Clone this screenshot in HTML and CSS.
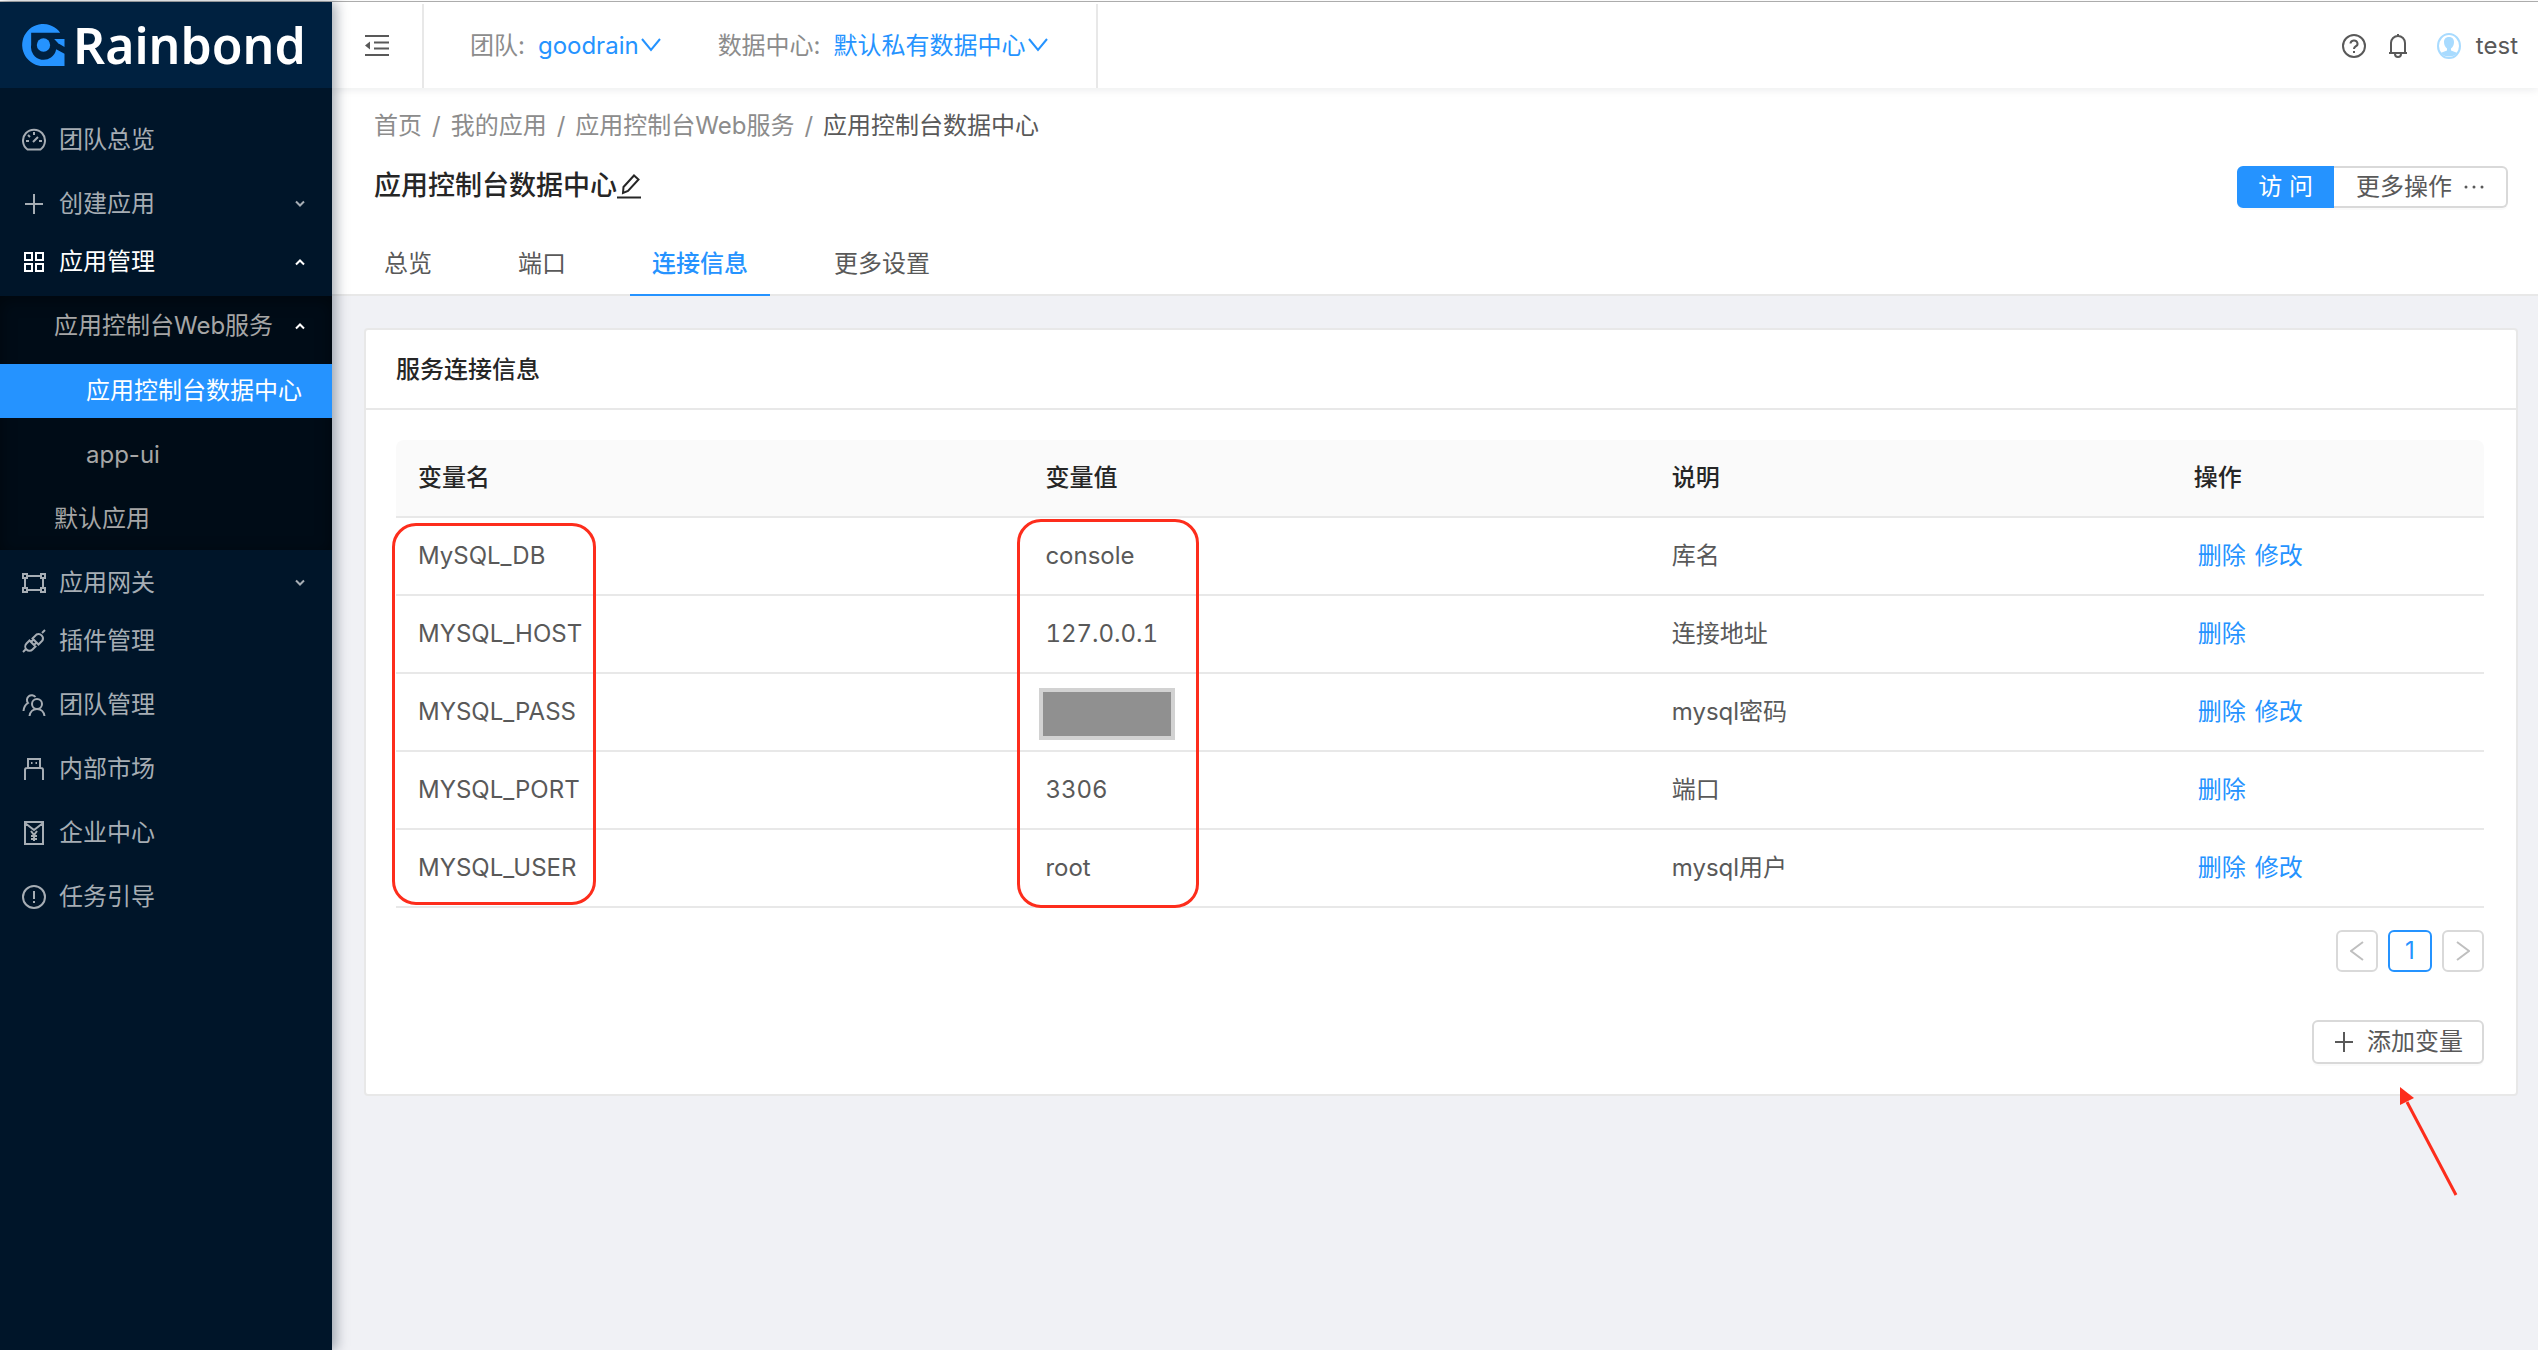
FILE: index.html
```
<!DOCTYPE html>
<html lang="zh-CN">
<head>
<meta charset="utf-8">
<title>应用控制台数据中心 - Rainbond</title>
<link rel="stylesheet" href="styles.css">
</head>
<body>
<div class="topline"></div>
<div class="app">
  <aside class="sider">
    <a class="logo" href="#">
      <svg class="logo-mark" viewBox="67 72 128 126" aria-hidden="true">
        <path d="M181 98A63 63 0 1 0 131 198H194V161L169 148A38 38 0 0 1 94 135V98Z"/>
        <circle cx="131" cy="135" r="20"/>
        <path d="M163 117H194V141L175 130Z"/>
      </svg>
      <span class="logo-text">Rainbond</span>
    </a>
    <nav class="menu">
      <a class="item" href="#">
        <svg class="ico" viewBox="0 0 24 24"><path d="M5.500 21.500A11 11 0 1 1 18.500 21.500Z"/><path d="M11 14l5-5M12 4v3M4 13h3M17 13h3M6 7l2 2"/></svg>
        <span>团队总览</span>
      </a>
      <a class="item title" href="#">
        <svg class="ico" viewBox="0 0 24 24"><path d="M3 12h18M12 2v20"/></svg>
        <span>创建应用</span>
        <svg class="arrow" viewBox="0 0 10 8"><path d="M1 1.500l4 4 4-4"/></svg>
      </a>
      <a class="item title open" href="#">
        <svg class="ico" viewBox="0 0 24 24"><path d="M3 3h7v7H3zM14 3h7v7h-7zM3 14h7v7H3zM14 14h7v7h-7z"/></svg>
        <span>应用管理</span>
        <svg class="arrow" viewBox="0 0 10 8"><path d="M1 6.500l4-4 4 4"/></svg>
      </a>
      <div class="submenu">
        <a class="item title level2" href="#">
          <span>应用控制台Web服务</span>
          <svg class="arrow lit" viewBox="0 0 10 8"><path d="M1 6.500l4-4 4 4"/></svg>
        </a>
        <a class="item level3 selected" href="#"><span>应用控制台数据中心</span></a>
        <a class="item level3" href="#"><span>app-ui</span></a>
        <a class="item level2" href="#"><span>默认应用</span></a>
      </div>
      <a class="item title" href="#">
        <svg class="ico" viewBox="0 0 24 24"><path d="M1 3h4v4H1zM19 3h4v4h-4zM1 17h4v4H1zM19 17h4v4h-4zM5 5h14M5 19h14M3 7v10M21 7v10"/></svg>
        <span>应用网关</span>
        <svg class="arrow" viewBox="0 0 10 8"><path d="M1 1.500l4 4 4-4"/></svg>
      </a>
      <a class="item" href="#">
        <svg class="ico" viewBox="0 0 24 24"><path d="M1 23l3-3M20 4l3-3M10.500 9.500l4-4a4.500 4.500 0 0 1 6 6l-4 4zM7.500 11.500l6 6-3 3a4.200 4.200 0 0 1-6-6zM9 13l2.500-2.500M12 16l2.500-2.500"/></svg>
        <span>插件管理</span>
      </a>
      <a class="item" href="#">
        <svg class="ico" viewBox="0 0 24 24"><circle cx="15" cy="11" r="5"/><path d="M7.500 23c.5-4 3.500-7 7.500-7s7 3 7.500 7M1.500 18c.3-4 2-6.500 4.500-8A4.800 4.800 0 1 1 13.500 4"/></svg>
        <span>团队管理</span>
      </a>
      <a class="item" href="#">
        <svg class="ico" viewBox="0 0 24 24"><path d="M3 23V13q0-2 2-2h14q2 0 2 2v10M6 11V2h12v9M9 6h1.500M13.500 6h1.500"/></svg>
        <span>内部市场</span>
      </a>
      <a class="item" href="#">
        <svg class="ico" viewBox="0 0 24 24"><path d="M3 1h18v22H3zM3 2l9 7 9-7M9 10l3 4 3-4M12 14v6M9 15h6M9 18h6"/></svg>
        <span>企业中心</span>
      </a>
      <a class="item" href="#">
        <svg class="ico" viewBox="0 0 24 24"><circle cx="12" cy="12" r="11"/><path d="M12 6v8M12 16v2"/></svg>
        <span>任务引导</span>
      </a>
    </nav>
  </aside>

  <div class="page">
    <header class="header">
      <button class="fold" aria-label="收起菜单">
        <svg class="ico dark" viewBox="0 0 24 24"><path d="M0 2h24M9 8.500h15M9 14.500h15M0 21h24"/><path class="solid" d="M0 11.500l5-4v8z"/></svg>
      </button>
      <div class="switches">
        <span class="switch">团队:<a href="#">goodrain<svg class="down" viewBox="0 0 20 14"><path d="M1 1l9 11 9-11"/></svg></a></span>
        <span class="switch">数据中心:<a href="#">默认私有数据中心<svg class="down" viewBox="0 0 20 14"><path d="M1 1l9 11 9-11"/></svg></a></span>
      </div>
      <div class="tools">
        <a href="#" aria-label="帮助"><svg class="ico dark" viewBox="0 0 24 24"><circle cx="12" cy="12" r="11"/><path d="M8.500 9.500a3.500 3.200 0 1 1 5 3q-1.500.8-1.500 2.500M12 17v2"/></svg></a>
        <a href="#" aria-label="通知"><svg class="ico dark" viewBox="0 0 24 24"><path d="M3 19h18M5 19V9a7 7 0 0 1 14 0v10M12 0v2M9 20a3 3 0 0 0 6 0"/></svg></a>
        <a class="user" href="#">
          <svg class="avatar" viewBox="0 0 24 26"><ellipse cx="12" cy="13" rx="11" ry="12"/><path d="M12 4c-3.500 0-5 2.300-5 5 0 3 1.200 5 3 6.500v2L3.500 20A12 12 0 0 0 20.500 20L14 17.500v-2C16 14 17 12 17 9c0-2.700-1.500-5-5-5z"/></svg>
          <span>test</span>
        </a>
      </div>
    </header>

    <section class="page-head">
      <nav class="crumbs">
        <a href="#">首页</a><i>/</i><a href="#">我的应用</a><i>/</i><a href="#">应用控制台Web服务</a><i>/</i><span>应用控制台数据中心</span>
      </nav>
      <div class="title-row">
        <h1>应用控制台数据中心<svg class="edit" viewBox="0 0 24 26"><path d="M0 24.500h24M6 20l.5-6L17 2.500l4.500 4L11 18z"/></svg></h1>
        <div class="btn-group">
          <button class="btn primary">访 问</button>
          <button class="btn more">更多操作<svg class="dots" viewBox="0 0 20 4"><circle cx="2" cy="2" r="1.500"/><circle cx="10" cy="2" r="1.500"/><circle cx="18" cy="2" r="1.500"/></svg></button>
        </div>
      </div>
      <nav class="tabs">
        <a href="#">总览</a>
        <a href="#">端口</a>
        <a class="active" href="#">连接信息</a>
        <a href="#">更多设置</a>
      </nav>
    </section>

    <main class="card">
      <h2>服务连接信息</h2>
      <div class="card-body">
        <div class="table-wrap">
          <table>
            <thead>
              <tr><th class="w30">变量名</th><th class="w30">变量值</th><th class="w25">说明</th><th class="w15">操作</th></tr>
            </thead>
            <tbody>
              <tr><td>MySQL_DB</td><td>console</td><td>库名</td><td class="ops"><a href="#">删除</a><a href="#">修改</a></td></tr>
              <tr><td>MYSQL_HOST</td><td>127.0.0.1</td><td>连接地址</td><td class="ops"><a href="#">删除</a></td></tr>
              <tr><td>MYSQL_PASS</td><td class="masked"><span class="mask"></span></td><td>mysql密码</td><td class="ops"><a href="#">删除</a><a href="#">修改</a></td></tr>
              <tr><td>MYSQL_PORT</td><td>3306</td><td>端口</td><td class="ops"><a href="#">删除</a></td></tr>
              <tr><td>MYSQL_USER</td><td>root</td><td>mysql用户</td><td class="ops"><a href="#">删除</a><a href="#">修改</a></td></tr>
            </tbody>
          </table>
          <div class="mark mark-name"></div>
          <div class="mark mark-value"></div>
        </div>
        <div class="pager">
          <button class="pg" aria-label="上一页" disabled><svg viewBox="0 0 14 20"><path d="M13 1L1 10l12 9"/></svg></button>
          <button class="pg current">1</button>
          <button class="pg" aria-label="下一页" disabled><svg viewBox="0 0 14 20"><path d="M1 1l12 9-12 9"/></svg></button>
        </div>
        <div class="foot">
          <button class="btn add"><svg viewBox="0 0 20 20"><path d="M1 10h18M10 0v20"/></svg>添加变量</button>
          <svg class="pointer" viewBox="0 0 60 112"><path class="shaft" d="M7 15L56 108"/><path class="head" d="M0 0L14 11L0 18z"/></svg>
        </div>
      </div>
    </main>
  </div>
</div>
</body>
</html>
```
FILE: styles.css
```
* { box-sizing: border-box; }
html, body { margin: 0; min-height: 100%; }
body {
  display: flex;
  flex-direction: column;
  min-height: 100vh;
  background: #f0f1f5;
  color: #595959;
  font: 24px/36px Inter, "Noto Sans CJK SC", sans-serif;
}
a { color: #2593ff; text-decoration: none; }
button { font: inherit; color: inherit; cursor: pointer; }
svg { flex: none; fill: none; stroke: currentColor; stroke-width: 2; }

.topline { height: 2px; background: #fff; border-bottom: 1px solid #b0b0b0; }
.app { display: flex; flex: 1; }

/* sidebar */
.sider {
  position: relative;
  z-index: 2;
  flex: none;
  width: 332px;
  background: #001529;
  box-shadow: 4px 0 12px rgba(0, 21, 41, .35);
}
.logo {
  display: flex;
  align-items: center;
  gap: 8px;
  height: 86px;
  padding-left: 22px;
  background: #002140;
  color: #fff;
}
.logo-mark { width: 43px; height: 42px; fill: #2593ff; stroke: none; }
.logo-text { font: 600 50px/60px "Noto Sans", sans-serif; }
.menu { display: flex; flex-direction: column; padding-top: 19px; }
.item {
  display: flex;
  align-items: center;
  gap: 13px;
  height: 54px;
  margin: 6px 0 4px;
  padding: 0 27px 0 22px;
  color: #a6adb4;
}
.item.title { margin: 6px 0 -2px; }
.item.open { color: #fff; margin-bottom: 7px; }
.ico { width: 24px; height: 24px; }
.ico.dark { color: #595959; display: block; }
.arrow { width: 10px; height: 8px; margin-left: auto; }
.arrow.lit { color: #fff; }
.submenu {
  display: flex;
  flex-direction: column;
  background: #000c17;
  box-shadow: inset 0 4px 16px rgba(0, 0, 0, .45);
}
.submenu .level2 { padding-left: 54px; }
.submenu .title { margin: 3px 0 5px; }
.submenu .level3 { padding-left: 86px; }
.item.selected { background: #2593ff; }
.submenu .item { color: #a6a6a6; }
.submenu .selected { color: #fff; }

/* top bar */
.page { flex: 1; min-width: 0; }
.header {
  position: relative;
  display: flex;
  height: 86px;
  padding-top: 2px;
  background: #fff;
  box-shadow: 0 2px 8px rgba(0, 21, 41, .08);
}
.fold {
  width: 92px;
  padding: 0 0 0 33px;
  border: 0;
  border-right: 2px solid #e8e8e8;
  background: none;
}
.switches {
  display: flex;
  align-items: center;
  gap: 57px;
  padding: 0 48px 0 46px;
  border-right: 2px solid #e8e8e8;
  color: #8c8c8c;
}
.switch a { margin-left: 13px; }
.down { width: 20px; height: 14px; margin-left: 2px; vertical-align: 2px; }
.tools { display: flex; align-items: center; gap: 20px; margin-left: auto; padding-right: 20px; }
.user { display: flex; align-items: center; gap: 15px; margin-left: 7px; color: #595959; }
.avatar { width: 24px; height: 26px; color: #a8dbff; }
.avatar path { fill: currentColor; stroke: none; }
.solid { fill: currentColor; stroke: none; }

/* page heading */
.page-head { padding: 20px 30px 0 42px; background: #fff; border-bottom: 2px solid #e8e8e8; }
.crumbs { display: flex; gap: 10px; color: #595959; }
.crumbs a, .crumbs i { color: #8c8c8c; font-style: normal; }
.title-row { display: flex; justify-content: space-between; align-items: flex-start; padding-top: 22px; }
h1 { display: flex; align-items: center; margin: 0; color: #262626; font-size: 27px; line-height: 40px; font-weight: 500; }
.edit { width: 24px; height: 26px; }
.btn-group { display: flex; }
.btn {
  display: flex;
  align-items: center;
  border: 2px solid #d9d9d9;
  border-radius: 6px;
  background: #fff;
  box-shadow: 0 2px 0 rgba(0, 0, 0, .02);
}
.primary { height: 42px; padding: 0 19px; border-color: #2593ff; border-radius: 6px 0 0 6px; background: #2593ff; color: #fff; }
.more { height: 42px; gap: 12px; padding: 0 22px; border-left: 0; border-radius: 0 6px 6px 0; }
.dots { width: 20px; height: 4px; fill: currentColor; stroke: none; }
.tabs { display: flex; gap: 42px; margin: 22px 0 -2px -12px; }
.tabs a { height: 66px; padding: 16px 22px 0; border-bottom: 2px solid transparent; color: #595959; }
.tabs .active { border-color: #2593ff; color: #2593ff; font-weight: 500; }

/* card */
.card { margin: 32px 20px 0 32px; border: 2px solid #e8e8e8; border-radius: 4px; background: #fff; }
h2 { margin: 0; padding: 22px 30px 20px; border-bottom: 2px solid #e8e8e8; color: #262626; font-size: 24px; line-height: 36px; font-weight: 500; }
.card-body { padding: 30px 32px 30px 30px; }
.table-wrap { position: relative; }
table { width: 100%; table-layout: fixed; border-spacing: 0; font-variant-numeric: tabular-nums; }
th, td { height: 78px; padding: 0 22px; border-bottom: 2px solid #e8e8e8; text-align: left; }
th + th, td + td { padding-left: 23px; }
th { background: #fafafa; color: #262626; font-weight: 500; }
th:first-child { border-top-left-radius: 8px; }
th:last-child { border-top-right-radius: 8px; }
.w30 { width: 30%; }
.w25 { width: 25%; }
.w15 { width: 15%; }
td.ops { padding-left: 27px; }
.ops a + a { margin-left: 9px; }
td.masked { padding: 4px 0 0 17px; }
.mask { display: block; width: 136px; height: 52px; border: 4px solid #d2d2d2; background: #909090; }
.mark { position: absolute; border: 3px solid #fd2d1c; border-radius: 24px; pointer-events: none; }
.mark-name { left: -4px; top: 83px; width: 204px; height: 382px; }
.mark-value { left: calc(30% - 5px); top: 79px; width: 182px; height: 389px; }
.pager { display: flex; justify-content: flex-end; gap: 10px; margin-top: 22px; }
.pg {
  display: flex;
  align-items: center;
  justify-content: center;
  width: 42px;
  height: 42px;
  padding: 0;
  border: 2px solid #d9d9d9;
  border-radius: 6px;
  background: #fff;
  color: #bfbfbf;
}
.pg svg { width: 14px; height: 20px; }
.pg.current { width: 44px; border-color: #2593ff; color: #2593ff; }
.foot { position: relative; display: flex; justify-content: flex-end; margin-top: 48px; }
.add { height: 44px; gap: 13px; padding: 0 19px 0 20px; }
.add svg { width: 20px; height: 20px; }
.pointer { position: absolute; right: 24px; top: 67px; width: 60px; height: 112px; color: #fd2d1c; }
.shaft { stroke-width: 3; }
.head { fill: currentColor; stroke: none; }
```
